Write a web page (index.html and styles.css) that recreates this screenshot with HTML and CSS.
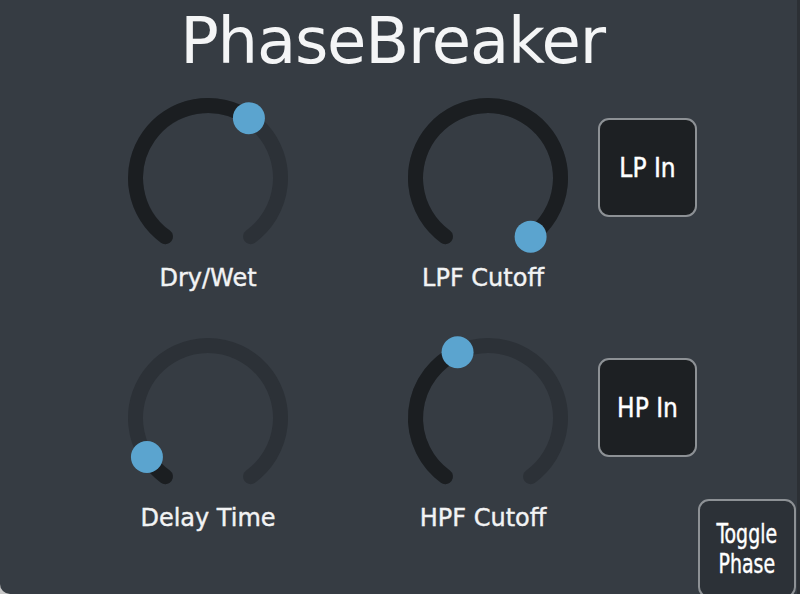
FILE: index.html
```html
<!DOCTYPE html>
<html>
<head>
<meta charset="utf-8">
<link rel="stylesheet" href="styles.css">
</head>
<body>
<div class="panel">
  <h1 class="title">PhaseBreaker</h1>
  <div class="grid">
    <div class="knob-cell">
      <svg class="knob" width="180" height="180" viewBox="0 0 180 180">
        <path class="track" d="M47.39 148.65 A72.5 72.5 0 1 1 132.61 148.65"/>
        <path class="value" d="M47.39 148.65 A72.5 72.5 0 0 1 130.91 30.14"/>
        <circle class="thumb" cx="130.91" cy="30.14" r="16"/>
      </svg>
      <div class="label">Dry/Wet</div>
    </div>
    <div class="knob-cell">
      <svg class="knob" width="180" height="180" viewBox="0 0 180 180">
        <path class="track" d="M47.39 148.65 A72.5 72.5 0 1 1 132.61 148.65"/>
        <path class="value" d="M47.39 148.65 A72.5 72.5 0 1 1 132.61 148.65"/>
        <circle class="thumb" cx="132.61" cy="148.65" r="16"/>
      </svg>
      <div class="label shift">LPF Cutoff</div>
    </div>
    <div class="btn-cell">
      <div class="btn dark">LP In</div>
    </div>
    <div class="knob-cell">
      <svg class="knob" width="180" height="180" viewBox="0 0 180 180">
        <path class="track" d="M47.39 148.65 A72.5 72.5 0 1 1 132.61 148.65"/>
        <path class="value" d="M47.39 148.65 A72.5 72.5 0 0 1 28.92 129.06"/>
        <circle class="thumb" cx="28.92" cy="129.06" r="16"/>
      </svg>
      <div class="label">Delay Time</div>
    </div>
    <div class="knob-cell">
      <svg class="knob" width="180" height="180" viewBox="0 0 180 180">
        <path class="track" d="M47.39 148.65 A72.5 72.5 0 1 1 132.61 148.65"/>
        <path class="value" d="M47.39 148.65 A72.5 72.5 0 0 1 59.56 24.20"/>
        <circle class="thumb" cx="59.56" cy="24.20" r="16"/>
      </svg>
      <div class="label shift">HPF Cutoff</div>
    </div>
    <div class="btn-cell">
      <div class="btn dark">HP In</div>
      <div class="btn toggle"><span class="squash">Toggle<br>Phase</span></div>
    </div>
  </div>
</div>
</body>
</html>
```

FILE: styles.css
```css
html, body {
  margin: 0;
  padding: 0;
  background: #c9c9c9;
}

.panel {
  width: 800px;
  height: 594px;
  box-sizing: border-box;
  background: #363c43;
  border-right: 3px solid #2c3035;
  border-bottom-left-radius: 10px;
  overflow: hidden;
  font-family: "DejaVu Sans", "Liberation Sans", sans-serif;
  color: #ffffff;
}

.title {
  margin: 0;
  padding: 9px 12px 0 0;
  font-size: 64px;
  line-height: 64px;
  letter-spacing: -1.2px;
  font-weight: normal;
  text-align: center;
  color: #f4f5f6;
}

.grid {
  margin: 15px 0 0 118px;
  display: grid;
  grid-template-columns: 260px 180px 99px;
  column-gap: 20px;
  row-gap: 36px;
  align-items: start;
}

.knob-cell {
  width: 180px;
  display: flex;
  flex-direction: column;
  align-items: center;
}

.knob {
  display: block;
}

.track,
.value {
  fill: none;
  stroke-width: 15;
  stroke-linecap: round;
}

.track {
  stroke: #2c3137;
}

.value {
  stroke: #1b1e21;
}

.thumb {
  fill: #5ba4cf;
}

.label {
  margin-top: -4px;
  font-size: 24px;
  line-height: 28px;
  color: #f2f3f4;
  white-space: nowrap;
  -webkit-text-stroke: 0.4px #f2f3f4;
}

.shift {
  margin-left: -10px;
}

.btn-cell {
  display: flex;
  flex-direction: column;
  align-items: flex-start;
}

.btn {
  box-sizing: border-box;
  width: 99px;
  height: 99px;
  border: 2px solid #8d9195;
  border-radius: 11px;
  display: flex;
  align-items: center;
  justify-content: center;
  font-family: "DejaVu Sans Condensed", "DejaVu Sans", sans-serif;
  font-stretch: condensed;
  font-size: 26px;
  line-height: 30px;
  color: #ffffff;
  text-align: center;
  -webkit-text-stroke: 0.4px #ffffff;
}

.dark {
  margin-top: 30px;
  background: #1d2023;
}

.toggle {
  margin-top: 42px;
  margin-left: 100px;
  width: 98px;
  background: #2c3137;
}

.squash {
  display: inline-block;
  font-size: 27px;
  transform: scaleX(0.78);
}
```
